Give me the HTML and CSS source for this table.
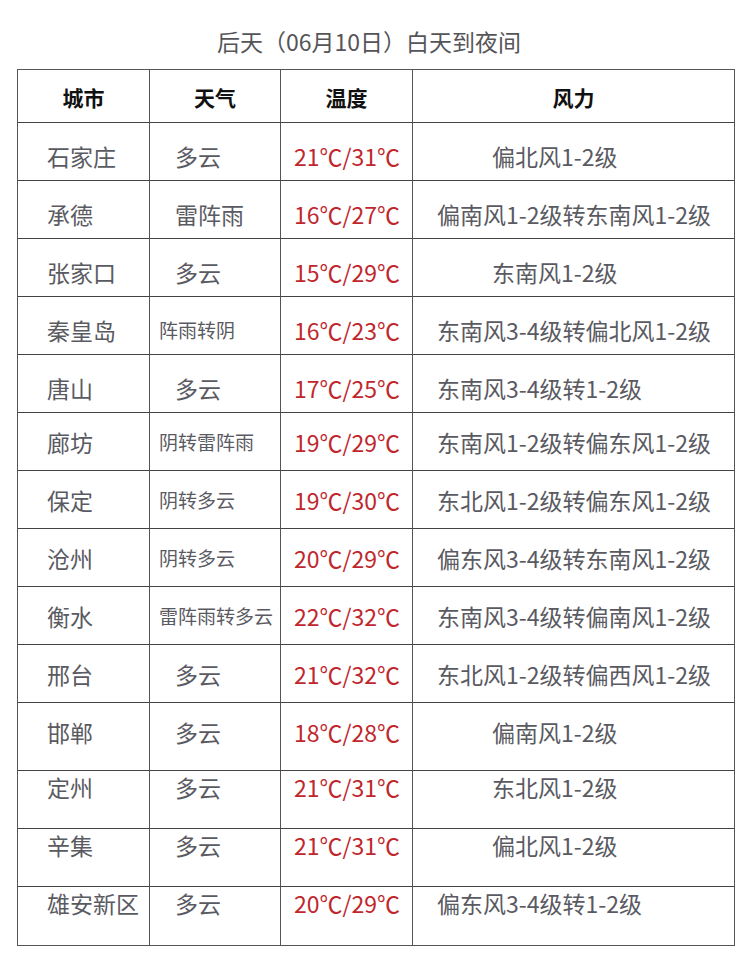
FILE: index.html
```html
<!DOCTYPE html>
<html lang="zh-CN">
<head>
<meta charset="utf-8">
<title>后天（06月10日）白天到夜间</title>
<link rel="stylesheet" href="styles.css">
</head>
<body>
<div class="title">后天（06月10日）白天到夜间</div>
<div class="tbl">
  <div class="row head">
    <div class="c">城市</div>
    <div class="c">天气</div>
    <div class="c">温度</div>
    <div class="c">风力</div>
  </div>
  <div class="row ra">
    <div class="c city">石家庄</div>
    <div class="c wx">多云</div>
    <div class="c temp">21℃/31℃</div>
    <div class="c wind short">偏北风1-2级</div>
  </div>
  <div class="row ra">
    <div class="c city">承德</div>
    <div class="c wx">雷阵雨</div>
    <div class="c temp">16℃/27℃</div>
    <div class="c wind">偏南风1-2级转东南风1-2级</div>
  </div>
  <div class="row ra">
    <div class="c city">张家口</div>
    <div class="c wx">多云</div>
    <div class="c temp">15℃/29℃</div>
    <div class="c wind short">东南风1-2级</div>
  </div>
  <div class="row ra">
    <div class="c city">秦皇岛</div>
    <div class="c wx sm">阵雨转阴</div>
    <div class="c temp">16℃/23℃</div>
    <div class="c wind">东南风3-4级转偏北风1-2级</div>
  </div>
  <div class="row ra">
    <div class="c city">唐山</div>
    <div class="c wx">多云</div>
    <div class="c temp">17℃/25℃</div>
    <div class="c wind">东南风3-4级转1-2级</div>
  </div>
  <div class="row rb">
    <div class="c city">廊坊</div>
    <div class="c wx sm">阴转雷阵雨</div>
    <div class="c temp">19℃/29℃</div>
    <div class="c wind">东南风1-2级转偏东风1-2级</div>
  </div>
  <div class="row rb">
    <div class="c city">保定</div>
    <div class="c wx sm">阴转多云</div>
    <div class="c temp">19℃/30℃</div>
    <div class="c wind">东北风1-2级转偏东风1-2级</div>
  </div>
  <div class="row rb">
    <div class="c city">沧州</div>
    <div class="c wx sm">阴转多云</div>
    <div class="c temp">20℃/29℃</div>
    <div class="c wind">偏东风3-4级转东南风1-2级</div>
  </div>
  <div class="row rb">
    <div class="c city">衡水</div>
    <div class="c wx sm">雷阵雨转多云</div>
    <div class="c temp">22℃/32℃</div>
    <div class="c wind">东南风3-4级转偏南风1-2级</div>
  </div>
  <div class="row rb">
    <div class="c city">邢台</div>
    <div class="c wx">多云</div>
    <div class="c temp">21℃/32℃</div>
    <div class="c wind">东北风1-2级转偏西风1-2级</div>
  </div>
  <div class="row rb">
    <div class="c city">邯郸</div>
    <div class="c wx">多云</div>
    <div class="c temp">18℃/28℃</div>
    <div class="c wind short">偏南风1-2级</div>
  </div>
  <div class="row rc">
    <div class="c city">定州</div>
    <div class="c wx">多云</div>
    <div class="c temp">21℃/31℃</div>
    <div class="c wind short">东北风1-2级</div>
  </div>
  <div class="row rc">
    <div class="c city">辛集</div>
    <div class="c wx">多云</div>
    <div class="c temp">21℃/31℃</div>
    <div class="c wind short">偏北风1-2级</div>
  </div>
  <div class="row rc last">
    <div class="c city">雄安新区</div>
    <div class="c wx">多云</div>
    <div class="c temp">20℃/29℃</div>
    <div class="c wind">偏东风3-4级转1-2级</div>
  </div>
</div>
</body>
</html>
```
FILE: styles.css
```css
html, body {
  margin: 0;
  padding: 0;
  background: #ffffff;
}

body {
  width: 750px;
  height: 970px;
  font-family: "Noto Sans CJK SC", "Noto Sans", sans-serif;
  color: #5a5a62;
  overflow: hidden;
}

.title {
  box-sizing: border-box;
  height: 69px;
  padding: 26px 12px 0 0;
  line-height: 30px;
  font-size: 23px;
  text-align: center;
  color: #555558;
}

.tbl {
  box-sizing: border-box;
  width: 718px;
  margin-left: 17px;
  border: 1px solid #555;
  display: grid;
  grid-template-columns: 132px 131px 132px 321px;
  grid-template-rows: 53px repeat(10, 58px) 68px 58px 58px 58px;
}

.row {
  display: contents;
}

.c {
  box-sizing: border-box;
  border-right: 1px solid #555;
  border-bottom: 1px solid #444;
  font-size: 23px;
  line-height: 24px;
  white-space: nowrap;
}

.c:nth-child(4) {
  border-right: none;
}

.last .c {
  border-bottom: none;
}

.head .c {
  display: flex;
  align-items: center;
  justify-content: center;
  padding-top: 1px;
  font-size: 21px;
  font-weight: bold;
  color: #111;
}

.ra .c { padding-top: 21px; }
.rb .c { padding-top: 17px; }
.rc .c { padding-top: 4px; }

.city { padding-left: 29px; }
.wx { padding-left: 25px; }
.wx.sm { padding-left: 9px; font-size: 19px; }
.temp { padding-left: 13px; color: #c0272d; }
.wind { padding-left: 24px; }
.wind.short { padding-left: 79px; }
```
